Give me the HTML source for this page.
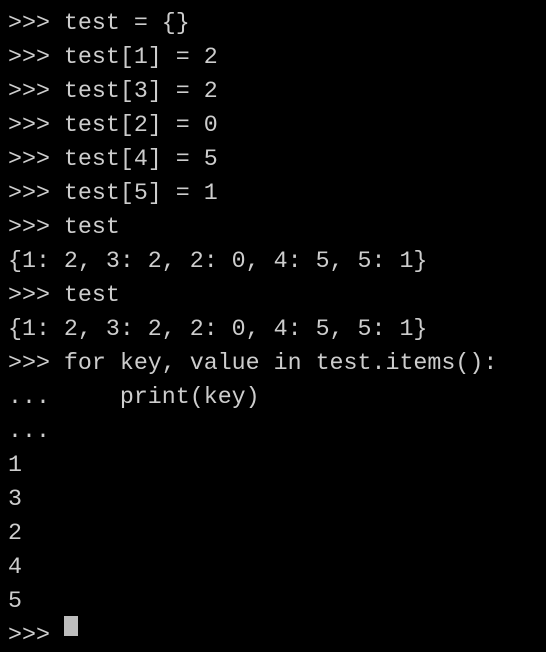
<!DOCTYPE html>
<html><head><style>
html,body{margin:0;padding:0;background:#000;width:546px;height:630px;overflow:hidden}
pre{position:absolute;left:8px;top:-28px;margin:0;font-family:"Liberation Mono",monospace;font-size:23.3px;line-height:34px;color:#cdcdcd}
#cur{position:absolute;left:64px;top:616px;width:14px;height:20px;background:#bdbdbd}
</style></head><body>
<pre>&gt;&gt;&gt; test.append(x)  # ()
&gt;&gt;&gt; test = {}
&gt;&gt;&gt; test[1] = 2
&gt;&gt;&gt; test[3] = 2
&gt;&gt;&gt; test[2] = 0
&gt;&gt;&gt; test[4] = 5
&gt;&gt;&gt; test[5] = 1
&gt;&gt;&gt; test
{1: 2, 3: 2, 2: 0, 4: 5, 5: 1}
&gt;&gt;&gt; test
{1: 2, 3: 2, 2: 0, 4: 5, 5: 1}
&gt;&gt;&gt; for key, value in test.items():
...     print(key)
...
1
3
2
4
5
&gt;&gt;&gt; </pre>
<div id="cur"></div>
</body></html>
